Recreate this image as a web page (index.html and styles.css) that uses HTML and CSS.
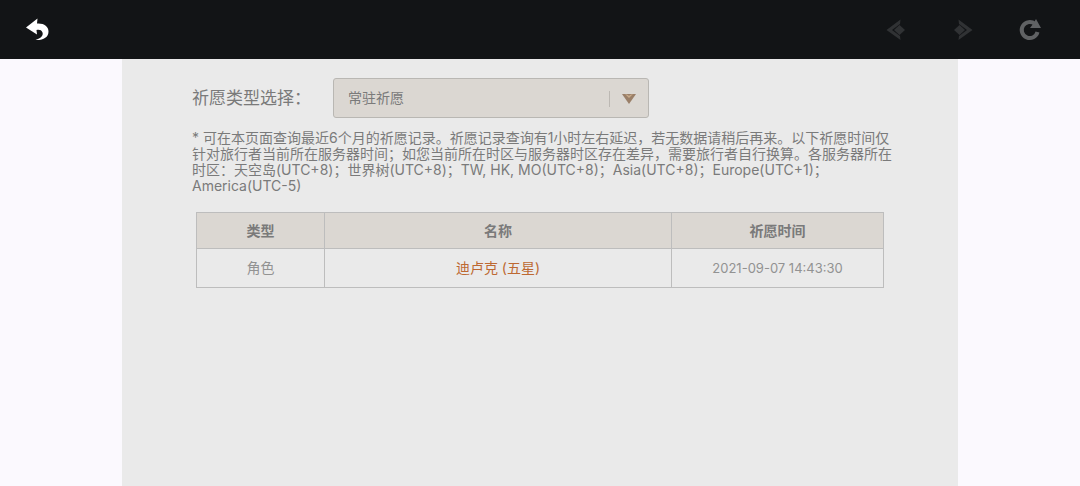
FILE: index.html
```html
<!DOCTYPE html>
<html lang="zh-CN">
<head>
    <meta charset="UTF-8">
    <meta name="viewport" content="width=device-width, initial-scale=1">
    <title>祈愿记录</title>
    <link rel="stylesheet" href="styles.css">
</head>
<body>
    <header class="toolbar">
        <button type="button" class="tool" aria-label="返回">
            <svg width="24" height="24" viewBox="0 0 24 24">
                <path fill="#fff" d="M1 9.500L12.500 0.500L12 5.500C19 5 23.500 8.500 23.500 13.500C23.500 19.500 18 22.500 10.500 22C16 20.500 18.500 17.500 17.500 14.500C16.500 12 14.500 11.500 11.500 12L12 16.500Z"/>
            </svg>
        </button>
        <nav class="tools">
            <button type="button" class="tool" aria-label="后退" disabled>
                <svg width="24" height="24" viewBox="0 0 24 24">
                    <path fill="#303234" d="M16.500 1.500L2.500 12L16.500 22L16 18L8 12L16 6Z"/>
                    <path fill="#303234" d="M15.500 7L21 12L15.500 17L10 12Z"/>
                </svg>
            </button>
            <button type="button" class="tool" aria-label="前进" disabled>
                <svg width="24" height="24" viewBox="0 0 24 24">
                    <path fill="#303234" d="M7.500 1.500L21.500 12L7.500 22L8 18L16 12L8 6Z"/>
                    <path fill="#303234" d="M8.500 7L14 12L8.500 17L3 12Z"/>
                </svg>
            </button>
            <button type="button" class="tool" aria-label="刷新">
                <svg width="24" height="24" viewBox="0 0 24 24">
                    <path fill="none" stroke="#606264" stroke-width="4" d="M17 6A8 8 0 1 0 19.500 14"/>
                    <path fill="#606264" d="M18 1L23 10L12 10L15 6Z"/>
                </svg>
            </button>
        </nav>
    </header>
    <main class="page">
        <div class="filter">
            <label for="wish-type">祈愿类型选择：</label>
            <div class="select-box">
                <select id="wish-type">
                    <option selected>常驻祈愿</option>
                </select>
                <svg class="arrow" width="14" height="10" viewBox="0 0 14 10">
                    <path fill="#9a7f68" d="M0 0H14L7 10Z"/>
                    <path fill="#c9ab8a" d="M3 0L7 4L11 0L8 1L7 2L6 1Z"/>
                </svg>
            </div>
        </div>
        <p class="note">* 可在本页面查询最近6个月的祈愿记录。祈愿记录查询有1小时左右延迟，若无数据请稍后再来。以下祈愿时间仅针对旅行者当前所在服务器时间；如您当前所在时区与服务器时区存在差异，需要旅行者自行换算。各服务器所在时区：天空岛(UTC+8)；世界树(UTC+8)；TW, HK, MO(UTC+8)；Asia(UTC+8)；Europe(UTC+1)；America(UTC-5)</p>
        <table class="log">
            <thead>
                <tr>
                    <th class="type">类型</th>
                    <th>名称</th>
                    <th class="time">祈愿时间</th>
                </tr>
            </thead>
            <tbody>
                <tr>
                    <td>角色</td>
                    <td class="five-star">迪卢克 (五星)</td>
                    <td class="date">2021-09-07 14:43:30</td>
                </tr>
            </tbody>
        </table>
    </main>
</body>
</html>
```
FILE: styles.css
```css
* {
    box-sizing: border-box;
}

body {
    margin: 0;
    min-height: 100vh;
    display: flex;
    flex-direction: column;
    align-items: center;
    background-color: #fbf9fe;
    color: #7a7a7a;
    font-family: Inter, "Noto Sans CJK SC", sans-serif;
    font-size: 14px;
    line-height: 16px;
}

/* top bar */
.toolbar {
    width: 100%;
    height: 59px;
    padding: 0 38px 0 25px;
    display: flex;
    align-items: center;
    justify-content: space-between;
    background-color: #121416;
}

.tools {
    display: flex;
    gap: 43px;
}

.tool {
    padding: 0;
    border: none;
    background: none;
    cursor: pointer;
}

.tool svg {
    display: block;
}

/* content */
.page {
    flex: 1;
    width: 100%;
    max-width: 836px;
    padding: 19px 62px 24px 70px;
    background-color: #eaeaea;
}

.filter {
    display: flex;
    align-items: center;
    gap: 22px;
}

.filter label {
    font-size: 17px;
    line-height: 24px;
}

.select-box {
    position: relative;
    flex: 0 1 316px;
}

.select-box select {
    width: 100%;
    height: 40px;
    padding: 0 48px 0 14px;
    appearance: none;
    border: 1px solid #b9b7b3;
    border-radius: 3px;
    background-color: #dbd7d2;
    color: #7a7a7a;
    font: inherit;
}

/* divider in front of the arrow */
.select-box::after {
    content: "";
    position: absolute;
    top: 13px;
    right: 39px;
    height: 16px;
    border-left: 1px solid #bcb8b3;
}

.arrow {
    position: absolute;
    top: 16px;
    right: 13px;
    pointer-events: none;
}

.note {
    margin: 12px 0 18px;
}

.log {
    width: 688px;
    max-width: 100%;
    margin-left: 4px;
    table-layout: fixed;
    border-collapse: collapse;
    text-align: center;
}

.log th,
.log td {
    padding: 0;
    border: 1px solid #bdbdbd;
}

.log th {
    height: 36px;
    background-color: #dbd7d2;
}

.log td {
    height: 39px;
    color: #929292;
}

.log .type {
    width: 128px;
}

.log .time {
    width: 212px;
}

.log .five-star {
    color: #bd6932;
}

.log .date {
    font-size: 13px;
}
```
